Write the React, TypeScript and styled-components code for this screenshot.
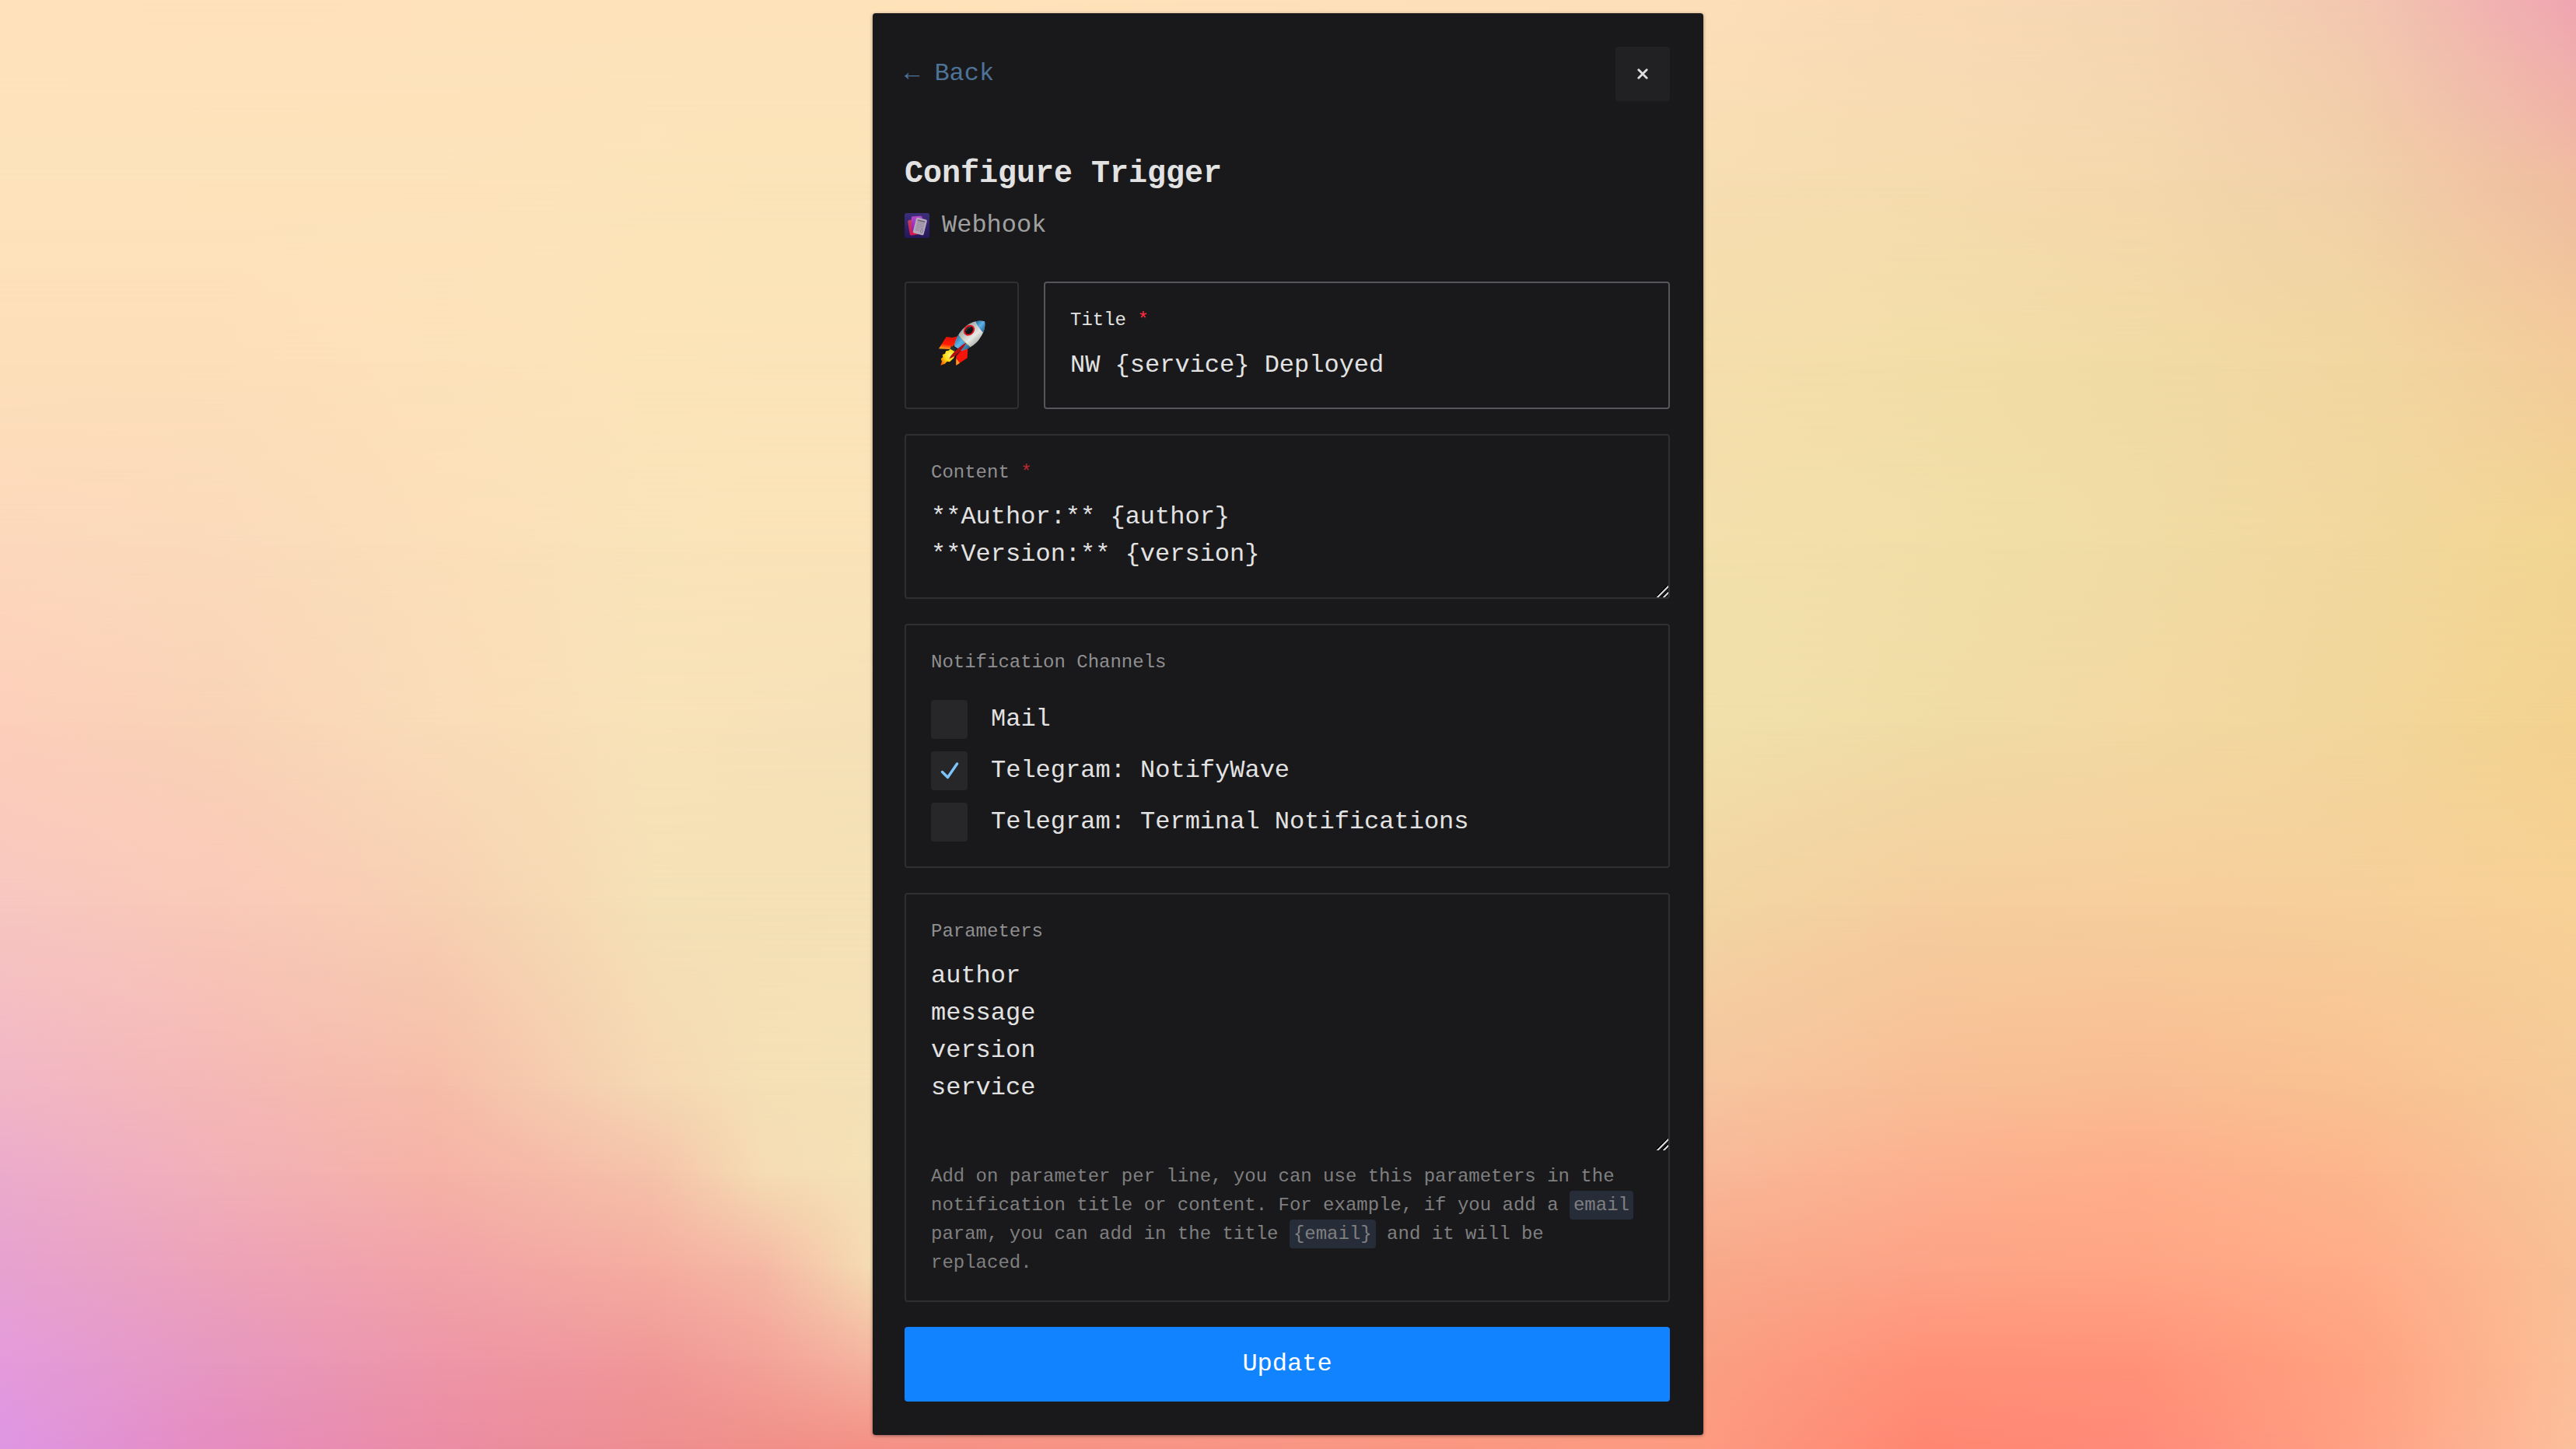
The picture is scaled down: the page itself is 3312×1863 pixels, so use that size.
import React from "react";
import styled, { createGlobalStyle } from "styled-components";

const GlobalStyle = createGlobalStyle`
  *, *::before, *::after { box-sizing: border-box; }
  body {
    margin: 0;
    background: #f6dcb0;
    font-family: "Liberation Mono", "DejaVu Sans Mono", monospace;
    font-size: 32px;
    line-height: 48px;
    color: #e2e2e2;
  }
`;

/* Gradient mesh: every row is a horizontal gradient, faded in over the row above it. */
const meshColumns = [0, 8.5, 17, 25.4, 29.6, 33.9, 66.1, 74.6, 83, 91.5, 100];
const meshRows: { at: number; colors: string }[] = [
  { at: 0, colors: "ffe2bc fee2bb fee3bb fee3ba fee3ba fee3ba fddfb8 fadab6 f6d6b4 f3c8b0 f0a5b2" },
  { at: 12.5, colors: "fde3bb fde3ba fde3ba fce4b9 fbe4b8 fbe4b8 f7deb2 f5dcae f5d8ac f1d0a8 f0bca0" },
  { at: 25, colors: "fddfba fddfba fce2b9 fce4b8 fbe4b8 fbe4b8 f5deac f2dda8 f1dba5 f2d7a0 f3cc9a" },
  { at: 37.5, colors: "fdd8bc fbdabb fbdfba f9e3b8 fae3b7 fae3b7 f3e0ac f1dea8 f0dca4 f2d89e f2d592" },
  { at: 50, colors: "fccfba f9d3b6 fadcb9 f8e2b7 f7e1b7 f6e1b7 f1e0ab f0dca6 f3d9a2 f2d69b f3d28f" },
  { at: 62.5, colors: "f8c6c0 fac9b8 f7d0b2 f5e1b6 f5e1b5 f5e1b5 f2d5a3 f5ce9f f6ce9c f6cf9a f7d196" },
  { at: 75, colors: "f1b6c6 f4b8b5 f6bda8 f5d8b4 f5e0b5 f5e1b6 f6c59f f8be96 f9bc92 f9c191 f6ca98" },
  { at: 81, colors: "ebabcc f2b0b8 f6b2a6 f5c2a9 f5dcb4 f5e1b6 f8b898 fcb08f feae8a fcb68c f7c598" },
  { at: 87.5, colors: "e6a2d0 eda2b8 f1a3a8 f5ad9f f5b8a4 f5dcb3 f8a98a fda387 ffa584 ffac88 f9bf96" },
  { at: 94, colors: "e49bdc e698c0 ee96a8 f09898 f3a298 f4b49f fa9f83 ff9179 ff9279 ffa280 fbbf98" },
  { at: 100, colors: "dd96e3 e68cc0 ea8ca4 ee8d90 f08f88 f48f85 fc9a80 ff8672 ff8a78 ffa084 fcbf9c" },
];

const rowGradient = (colors: string) =>
  `linear-gradient(to right, ${colors
    .split(" ")
    .map((c, i) => `#${c} ${meshColumns[i]}%`)
    .join(", ")})`;

const Page = styled.div`
  display: grid;
  min-height: 100vh;
`;

const Backdrop = styled.div`
  grid-area: 1 / 1;
  display: grid;
`;

const MeshRow = styled.div<{ $colors: string; $from: number; $to: number }>`
  grid-area: 1 / 1;
  background: ${(p) => rowGradient(p.$colors)};
  mask-image: ${(p) =>
    p.$to === 0 ? "none" : `linear-gradient(to bottom, transparent ${p.$from}%, #000 ${p.$to}%)`};
`;

const Main = styled.main`
  grid-area: 1 / 1;
  z-index: 1;
  display: flex;
  justify-content: center;
  align-items: flex-start;
  padding: 17px 16px;
`;

const Panel = styled.section`
  width: 100%;
  max-width: 1068px;
  padding: 43px 43px 43px 41px;
  border-radius: 4px;
  background: #19191b;
  box-shadow: 0 1px 4px rgba(0, 0, 0, 0.4);
`;

const Header = styled.header`
  display: flex;
  justify-content: space-between;
  align-items: center;
  margin-bottom: 64px;
`;

const BackLink = styled.a`
  color: #4f7297;
  text-decoration: none;
`;

const CloseButton = styled.button`
  display: grid;
  place-items: center;
  width: 70px;
  height: 70px;
  padding: 0;
  border: 0;
  border-radius: 4px;
  background: #212123;
`;

const Heading = styled.h1`
  margin: 0 0 12px;
  font-size: 40px;
  line-height: 60px;
  font-weight: 700;
`;

const Source = styled.p`
  display: flex;
  align-items: center;
  gap: 16px;
  margin: 0 0 48px;
  color: #a0a0a0;
`;

const Form = styled.form`
  display: flex;
  flex-direction: column;
  gap: 32px;
`;

const TitleRow = styled.div`
  display: grid;
  grid-template-columns: 147px 1fr;
  gap: 32px;
`;

const IconButton = styled.button`
  display: grid;
  place-items: center;
  padding: 0 0 6px;
  border: 2px solid #2f2f32;
  border-radius: 4px;
  background: none;
`;

const Field = styled.div<{ $active?: boolean }>`
  display: flex;
  flex-direction: column;
  border: 2px solid ${(p) => (p.$active ? "#55555b" : "#2f2f32")};
  border-radius: 4px;
  color: ${(p) => (p.$active ? "#e2e2e2" : "#8f8f91")};
  --required: ${(p) => (p.$active ? "#ff2c40" : "#b82733")};
`;

const Group = styled.fieldset`
  min-width: 0;
  margin: 0;
  padding: 0 32px 32px;
  border: 2px solid #2f2f32;
  border-radius: 4px;
`;

const Label = styled.label`
  padding: 30px 32px 15px;
  font-size: 24px;
  line-height: 36px;
`;

const Legend = styled.legend`
  float: left;
  width: 100%;
  padding: 30px 0;
  font-size: 24px;
  line-height: 36px;
  color: #8f8f91;
`;

const Required = styled.span`
  color: var(--required);
`;

const TextInput = styled.input`
  width: 100%;
  height: 79px;
  padding: 0 32px 31px;
  border: 0;
  outline: 0;
  background: none;
  color: #e2e2e2;
  font: inherit;
`;

const TextArea = styled.textarea<{ $height: number }>`
  display: block;
  width: 100%;
  height: ${(p) => p.$height}px;
  padding: 0 32px;
  border: 0;
  outline: 0;
  resize: vertical;
  overflow: hidden;
  background: none;
  color: #e2e2e2;
  font: inherit;

  &::-webkit-resizer {
    background: linear-gradient(
      135deg,
      transparent 43%,
      #000 43% 49%,
      #d0d0d0 49% 57%,
      transparent 57% 70%,
      #000 70% 76%,
      #d0d0d0 76% 84%,
      transparent 84%
    );
  }
`;

const Options = styled.div`
  clear: both;
  display: flex;
  flex-direction: column;
  gap: 16px;
`;

const Option = styled.label`
  display: flex;
  align-items: center;
  gap: 30px;
`;

const CheckCell = styled.span`
  display: grid;
  place-items: center;
  width: 47px;
  height: 50px;
`;

const Checkbox = styled.input`
  grid-area: 1 / 1;
  appearance: none;
  width: 100%;
  height: 100%;
  margin: 0;
  border-radius: 4px;
  background: #272729;

  & + svg { grid-area: 1 / 1; visibility: hidden; pointer-events: none; }
  &:checked + svg { visibility: visible; }
`;

const Help = styled.p`
  margin: 0;
  padding: 15px 32px 30px;
  font-size: 24px;
  line-height: 37px;
  color: #7f7f80;
`;

const Code = styled.code`
  padding: 5px;
  border-radius: 4px;
  background: #262c38;
  font: inherit;
`;

const SubmitButton = styled.button`
  height: 96px;
  border: 0;
  border-radius: 4px;
  background: #1283ff;
  color: #fff;
  font: inherit;
`;

const CloseIcon = () => (
  <svg width="14" height="14" viewBox="0 0 14 14" aria-hidden="true">
    <path d="M1.8 1.8 12.2 12.2M12.2 1.8 1.8 12.2" stroke="#dedede" strokeWidth="2.8" strokeLinecap="round" />
  </svg>
);

const CheckIcon = () => (
  <svg width="24" height="22" viewBox="0 0 24 22" fill="none" aria-hidden="true">
    <path d="M2.5 12.5 9.5 19.5 21.5 2" stroke="#7cc4fa" strokeWidth="3.4" strokeLinecap="round" strokeLinejoin="round" />
  </svg>
);

const WebhookIcon = () => (
  <svg width="32" height="32" viewBox="0 0 96 96" aria-hidden="true">
    <defs>
      <linearGradient id="tile" x1="0" y1="0" x2="0" y2="1">
        <stop offset="0" stopColor="#3d2e7c" />
        <stop offset="1" stopColor="#24175a" />
      </linearGradient>
      <linearGradient id="violet" x1="0" y1="0" x2="0" y2="1">
        <stop offset="0" stopColor="#b34bc9" />
        <stop offset="1" stopColor="#9417b4" />
      </linearGradient>
      <linearGradient id="crimson" x1="0" y1="0" x2="0" y2="1">
        <stop offset="0" stopColor="#c04062" />
        <stop offset="1" stopColor="#d3164b" />
      </linearGradient>
    </defs>
    <rect width="96" height="96" rx="8" fill="url(#tile)" />
    <rect x="16" y="24" width="42" height="60" rx="6" fill="url(#crimson)" transform="rotate(-9 37 54)" />
    <rect x="27" y="12" width="42" height="58" rx="6" fill="url(#violet)" transform="rotate(-2 48 41)" />
    <g transform="rotate(14 59 51)">
      <rect x="38" y="20" width="43" height="62" rx="6" fill="#b3a8ba" />
      <path d="M45 30h29" stroke="#6f6578" strokeWidth="5" />
      <path d="M45 38h29M45 44h29M45 50h29M45 56h29M45 62h16M45 68h16" stroke="#85798f" strokeWidth="2" />
      <rect x="66" y="61" width="8" height="12" rx="3" fill="none" stroke="#6f6578" strokeWidth="2" />
    </g>
  </svg>
);

const RocketIcon = () => (
  <svg width="60" height="58" viewBox="0 0 180 174" aria-hidden="true">
    <defs>
      <linearGradient id="hull" x1="0.25" y1="0.2" x2="0.75" y2="0.75">
        <stop offset="0" stopColor="#5d6a70" />
        <stop offset="0.3" stopColor="#aeb4b4" />
        <stop offset="0.6" stopColor="#e6e9e4" />
        <stop offset="1" stopColor="#7d8582" />
      </linearGradient>
      <linearGradient id="blue" x1="0" y1="0" x2="1" y2="0.9">
        <stop offset="0" stopColor="#0d4f82" />
        <stop offset="0.45" stopColor="#5fb4e8" />
        <stop offset="1" stopColor="#07355f" />
      </linearGradient>
      <linearGradient id="fin" x1="0.4" y1="0" x2="0.2" y2="1">
        <stop offset="0" stopColor="#e01208" />
        <stop offset="0.6" stopColor="#ff1a05" />
        <stop offset="1" stopColor="#ffb020" />
      </linearGradient>
      <radialGradient id="flame" cx="0.6" cy="0.4" r="0.7">
        <stop offset="0" stopColor="#fff47a" />
        <stop offset="0.5" stopColor="#ffdb10" />
        <stop offset="1" stopColor="#f56a00" />
      </radialGradient>
      <clipPath id="body">
        <path d="M177 4C150-4 116 8 92 34C74 54 64 76 60 99L88 117C112 110 138 96 155 74C174 50 181 24 177 4Z" />
      </clipPath>
    </defs>
    <path d="M76 60 52 66 29 63 0 109 42 111 62 92Z" fill="url(#fin)" />
    <path d="M112 108 110 145 67 173 67 138 90 112Z" fill="#f5140a" />
    <path d="M67 146v27l14-9Z" fill="#ff9a1a" />
    <path d="M46 108 66 122 58 145 42 160 32 158 24 167 7 173 12 158 8 148 16 142 14 132 24 128 28 118 38 116Z" fill="url(#flame)" />
    <path d="M48 98 66 108 62 120 44 110Z" fill="#20333d" />
    <g clipPath="url(#body)">
      <rect width="180" height="174" fill="url(#hull)" />
      <path d="M76 52Q94 84 132 108L100 130 50 105Z" fill="url(#blue)" />
      <path d="M140 0Q152 30 176 52L190 20 180-6Z" fill="url(#blue)" />
      <path d="M78 56Q96 84 126 104" fill="none" stroke="#d9c26a" strokeWidth="3" />
    </g>
    <path d="M106 86C92 92 52 122 40 148C60 142 90 116 106 86Z" fill="#b20d10" />
    <ellipse cx="117" cy="38" rx="23" ry="19" transform="rotate(-42 117 38)" fill="#e3141c" />
    <ellipse cx="117" cy="38" rx="17" ry="13" transform="rotate(-42 117 38)" fill="#0a1216" />
    <path d="M106 40q4-14 18-14" fill="none" stroke="#4a5a60" strokeWidth="3" />
  </svg>
);

const channels = [
  { name: "Mail", enabled: false },
  { name: "Telegram: NotifyWave", enabled: true },
  { name: "Telegram: Terminal Notifications", enabled: false },
];

export default function App() {
  return (
    <Page>
      <GlobalStyle />
      <Backdrop aria-hidden="true">
        {meshRows.map((row, i) => (
          <MeshRow key={row.at} $colors={row.colors} $from={i ? meshRows[i - 1].at : 0} $to={row.at} />
        ))}
      </Backdrop>
      <Main>
        <Panel>
          <Header>
            <BackLink href="#back">← Back</BackLink>
            <CloseButton type="button" aria-label="Close">
              <CloseIcon />
            </CloseButton>
          </Header>

          <Heading>Configure Trigger</Heading>
          <Source>
            <WebhookIcon />
            Webhook
          </Source>

          <Form onSubmit={(e) => e.preventDefault()}>
            <TitleRow>
              <IconButton type="button" aria-label="Choose icon">
                <RocketIcon />
              </IconButton>
              <Field $active>
                <Label htmlFor="title">
                  Title <Required>*</Required>
                </Label>
                <TextInput id="title" type="text" required defaultValue="NW {service} Deployed" />
              </Field>
            </TitleRow>

            <Field>
              <Label htmlFor="content">
                Content <Required>*</Required>
              </Label>
              <TextArea
                id="content"
                required
                spellCheck={false}
                $height={127}
                defaultValue={"**Author:** {author}\n**Version:** {version}"}
              />
            </Field>

            <Group>
              <Legend>Notification Channels</Legend>
              <Options>
                {channels.map((channel) => (
                  <Option key={channel.name}>
                    <CheckCell>
                      <Checkbox type="checkbox" defaultChecked={channel.enabled} />
                      <CheckIcon />
                    </CheckCell>
                    {channel.name}
                  </Option>
                ))}
              </Options>
            </Group>

            <Field>
              <Label htmlFor="parameters">Parameters</Label>
              <TextArea
                id="parameters"
                spellCheck={false}
                $height={248}
                defaultValue={"author\nmessage\nversion\nservice"}
              />
              <Help>
                Add on parameter per line, you can use this parameters in the notification title or
                content. For example, if you add a <Code>email</Code> param, you can add in the title{" "}
                <Code>{"{email}"}</Code> and it will be replaced.
              </Help>
            </Field>

            <SubmitButton type="submit">Update</SubmitButton>
          </Form>
        </Panel>
      </Main>
    </Page>
  );
}
